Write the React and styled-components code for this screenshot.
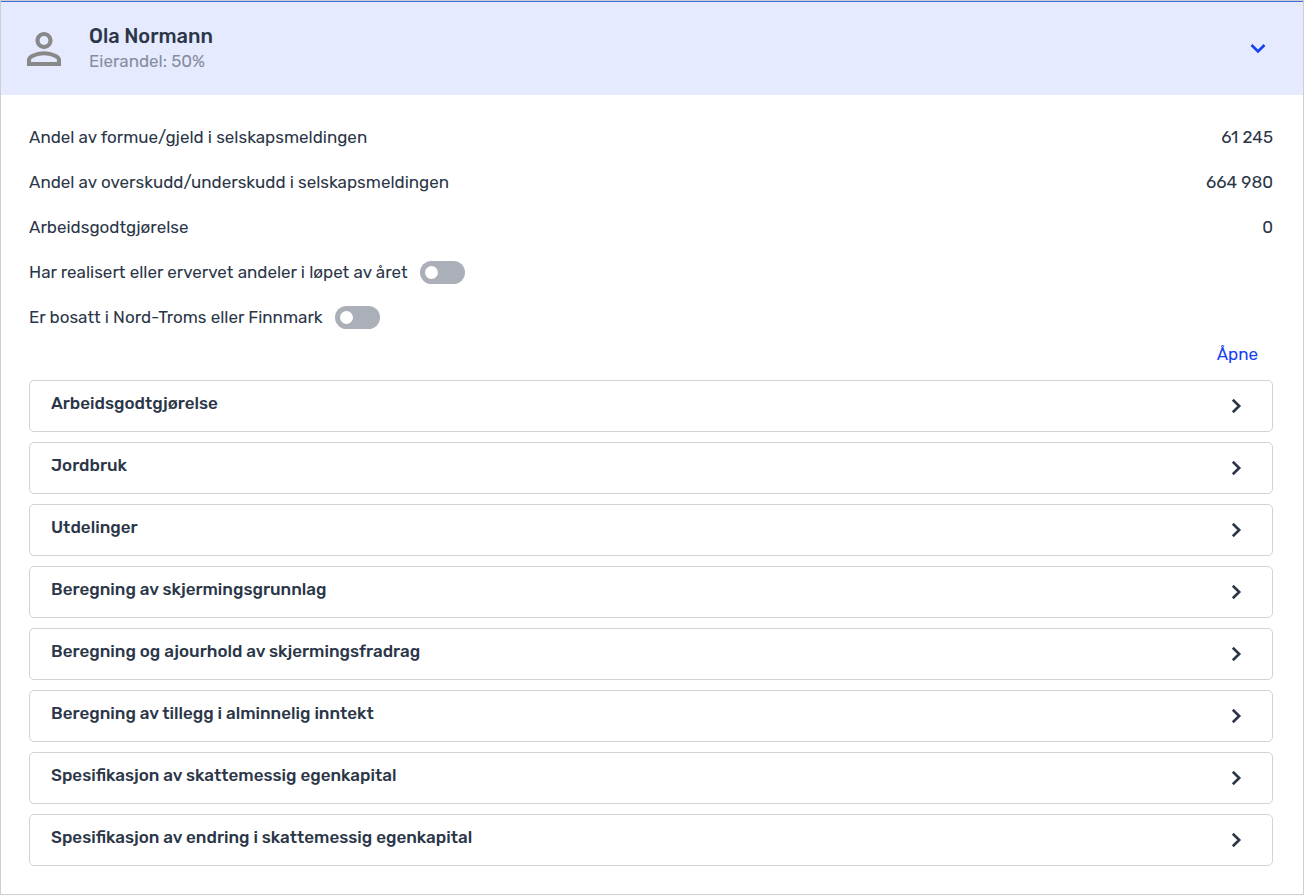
import React, { useState } from "react";
import styled, { createGlobalStyle } from "styled-components";

const GlobalStyle = createGlobalStyle`
  * {
    box-sizing: border-box;
  }
  body {
    margin: 0;
    background: #fff;
    color: #2b3648;
    font-family: Rubik, Roboto, sans-serif;
    font-size: 17px;
    line-height: 25px;
  }
  button {
    font: inherit;
    color: inherit;
    cursor: pointer;
  }
`;

const Card = styled.section`
  border: 1px solid #cfcfd2;
`;
const CardHeader = styled.button`
  display: flex;
  align-items: center;
  width: 100%;
  height: 94px;
  padding: 0 37px 0 26px;
  border: 0;
  border-top: 1px solid #3d6be0;
  background: #e5eaff;
  text-align: left;
`;
const OwnerText = styled.span`
  display: flex;
  flex-direction: column;
  flex: 1;
  margin-left: 28px;
`;
const OwnerName = styled.span`
  font-size: 20px;
  font-weight: 500;
`;
const OwnerShare = styled.span`
  color: #868c9c;
`;
const CardBody = styled.div`
  padding: 20px 30px 28px 28px;
`;
const Row = styled.div`
  display: flex;
  align-items: center;
  justify-content: ${(props) => (props.$spread ? "space-between" : "flex-start")};
  gap: 12px;
  height: 45px;
`;
const Toggle = styled.input`
  appearance: none;
  display: flex;
  align-items: center;
  width: 45px;
  height: 23px;
  margin: 0;
  padding: 0 5px;
  border-radius: 12px;
  background: ${(props) => (props.checked ? "#1340f2" : "#abafb8")};
  cursor: pointer;

  &::before {
    content: "";
    width: 13px;
    height: 13px;
    margin-left: ${(props) => (props.checked ? "auto" : "0")};
    border-radius: 50%;
    background: #fff;
  }
`;
const Actions = styled.div`
  display: flex;
  justify-content: flex-end;
  padding: 2px 15px 13px 0;
`;
const TextButton = styled.button`
  padding: 0;
  border: 0;
  background: none;
  && {
    color: #1340f2;
  }
`;
const SectionList = styled.div`
  display: flex;
  flex-direction: column;
  gap: 10px;
`;
const SectionButton = styled.button`
  display: flex;
  align-items: center;
  justify-content: space-between;
  height: 52px;
  padding: 0 30px 0 21px;
  border: 1px solid #d2d3d6;
  border-radius: 5px;
  background: #fff;
  text-align: left;
`;
const SectionTitle = styled.span`
  padding-bottom: 6px;
  font-weight: 500;
`;

const PersonIcon = () => (
  <svg width="34" height="34" viewBox="4 4 16 16" fill="#888" aria-hidden="true">
    <path d="M12 5.9c1.16 0 2.1.94 2.1 2.1s-.94 2.1-2.1 2.1S9.9 9.16 9.9 8s.94-2.1 2.1-2.1m0 9c2.97 0 6.1 1.46 6.1 2.1v1.1H5.9V17c0-.64 3.13-2.1 6.1-2.1M12 4C9.79 4 8 5.79 8 8s1.79 4 4 4 4-1.79 4-4-1.79-4-4-4zm0 9c-2.67 0-8 1.34-8 4v3h16v-3c0-2.66-5.33-4-8-4z" />
  </svg>
);
const ChevronDown = () => (
  <svg width="16" height="10" viewBox="0 0 16 10" fill="none" aria-hidden="true">
    <path d="M1.500 1 8 7.500 14.500 1" stroke="#1340f2" strokeWidth="2.600" />
  </svg>
);
const ChevronRight = () => (
  <svg width="11" height="16" viewBox="0 0 11 16" fill="none" aria-hidden="true">
    <path d="M1.800 1.700 8.200 8l-6.400 6.300" stroke="#2b3648" strokeWidth="2.600" />
  </svg>
);

// thousands are split by a non-breaking space
const amounts = [
  { label: "Andel av formue/gjeld i selskapsmeldingen", value: "61\u00a0245" },
  { label: "Andel av overskudd/underskudd i selskapsmeldingen", value: "664\u00a0980" },
  { label: "Arbeidsgodtgjørelse", value: "0" },
];

const sections = [
  "Arbeidsgodtgjørelse",
  "Jordbruk",
  "Utdelinger",
  "Beregning av skjermingsgrunnlag",
  "Beregning og ajourhold av skjermingsfradrag",
  "Beregning av tillegg i alminnelig inntekt",
  "Spesifikasjon av skattemessig egenkapital",
  "Spesifikasjon av endring i skattemessig egenkapital",
];

const ToggleRow = ({ id, label }) => {
  const [checked, setChecked] = useState(false);

  return (
    <Row>
      <label htmlFor={id}>{label}</label>
      <Toggle
        type="checkbox"
        id={id}
        checked={checked}
        onChange={(e) => setChecked(e.target.checked)}
      />
    </Row>
  );
};

export default function App() {
  const [open, setOpen] = useState(true);

  return (
    <>
      <GlobalStyle />
      <Card>
        <CardHeader type="button" aria-expanded={open} onClick={() => setOpen(!open)}>
          <PersonIcon />
          <OwnerText>
            <OwnerName>Ola Normann</OwnerName>
            <OwnerShare>Eierandel: 50%</OwnerShare>
          </OwnerText>
          <ChevronDown />
        </CardHeader>
        {open && (
          <CardBody>
            {amounts.map((item) => (
              <Row key={item.label} $spread>
                <span>{item.label}</span>
                <span>{item.value}</span>
              </Row>
            ))}
            <ToggleRow id="realisert" label="Har realisert eller ervervet andeler i løpet av året" />
            <ToggleRow id="bosatt" label="Er bosatt i Nord-Troms eller Finnmark" />
            <Actions>
              <TextButton type="button">Åpne</TextButton>
            </Actions>
            <SectionList>
              {sections.map((title) => (
                <SectionButton type="button" key={title}>
                  <SectionTitle>{title}</SectionTitle>
                  <ChevronRight />
                </SectionButton>
              ))}
            </SectionList>
          </CardBody>
        )}
      </Card>
    </>
  );
}
